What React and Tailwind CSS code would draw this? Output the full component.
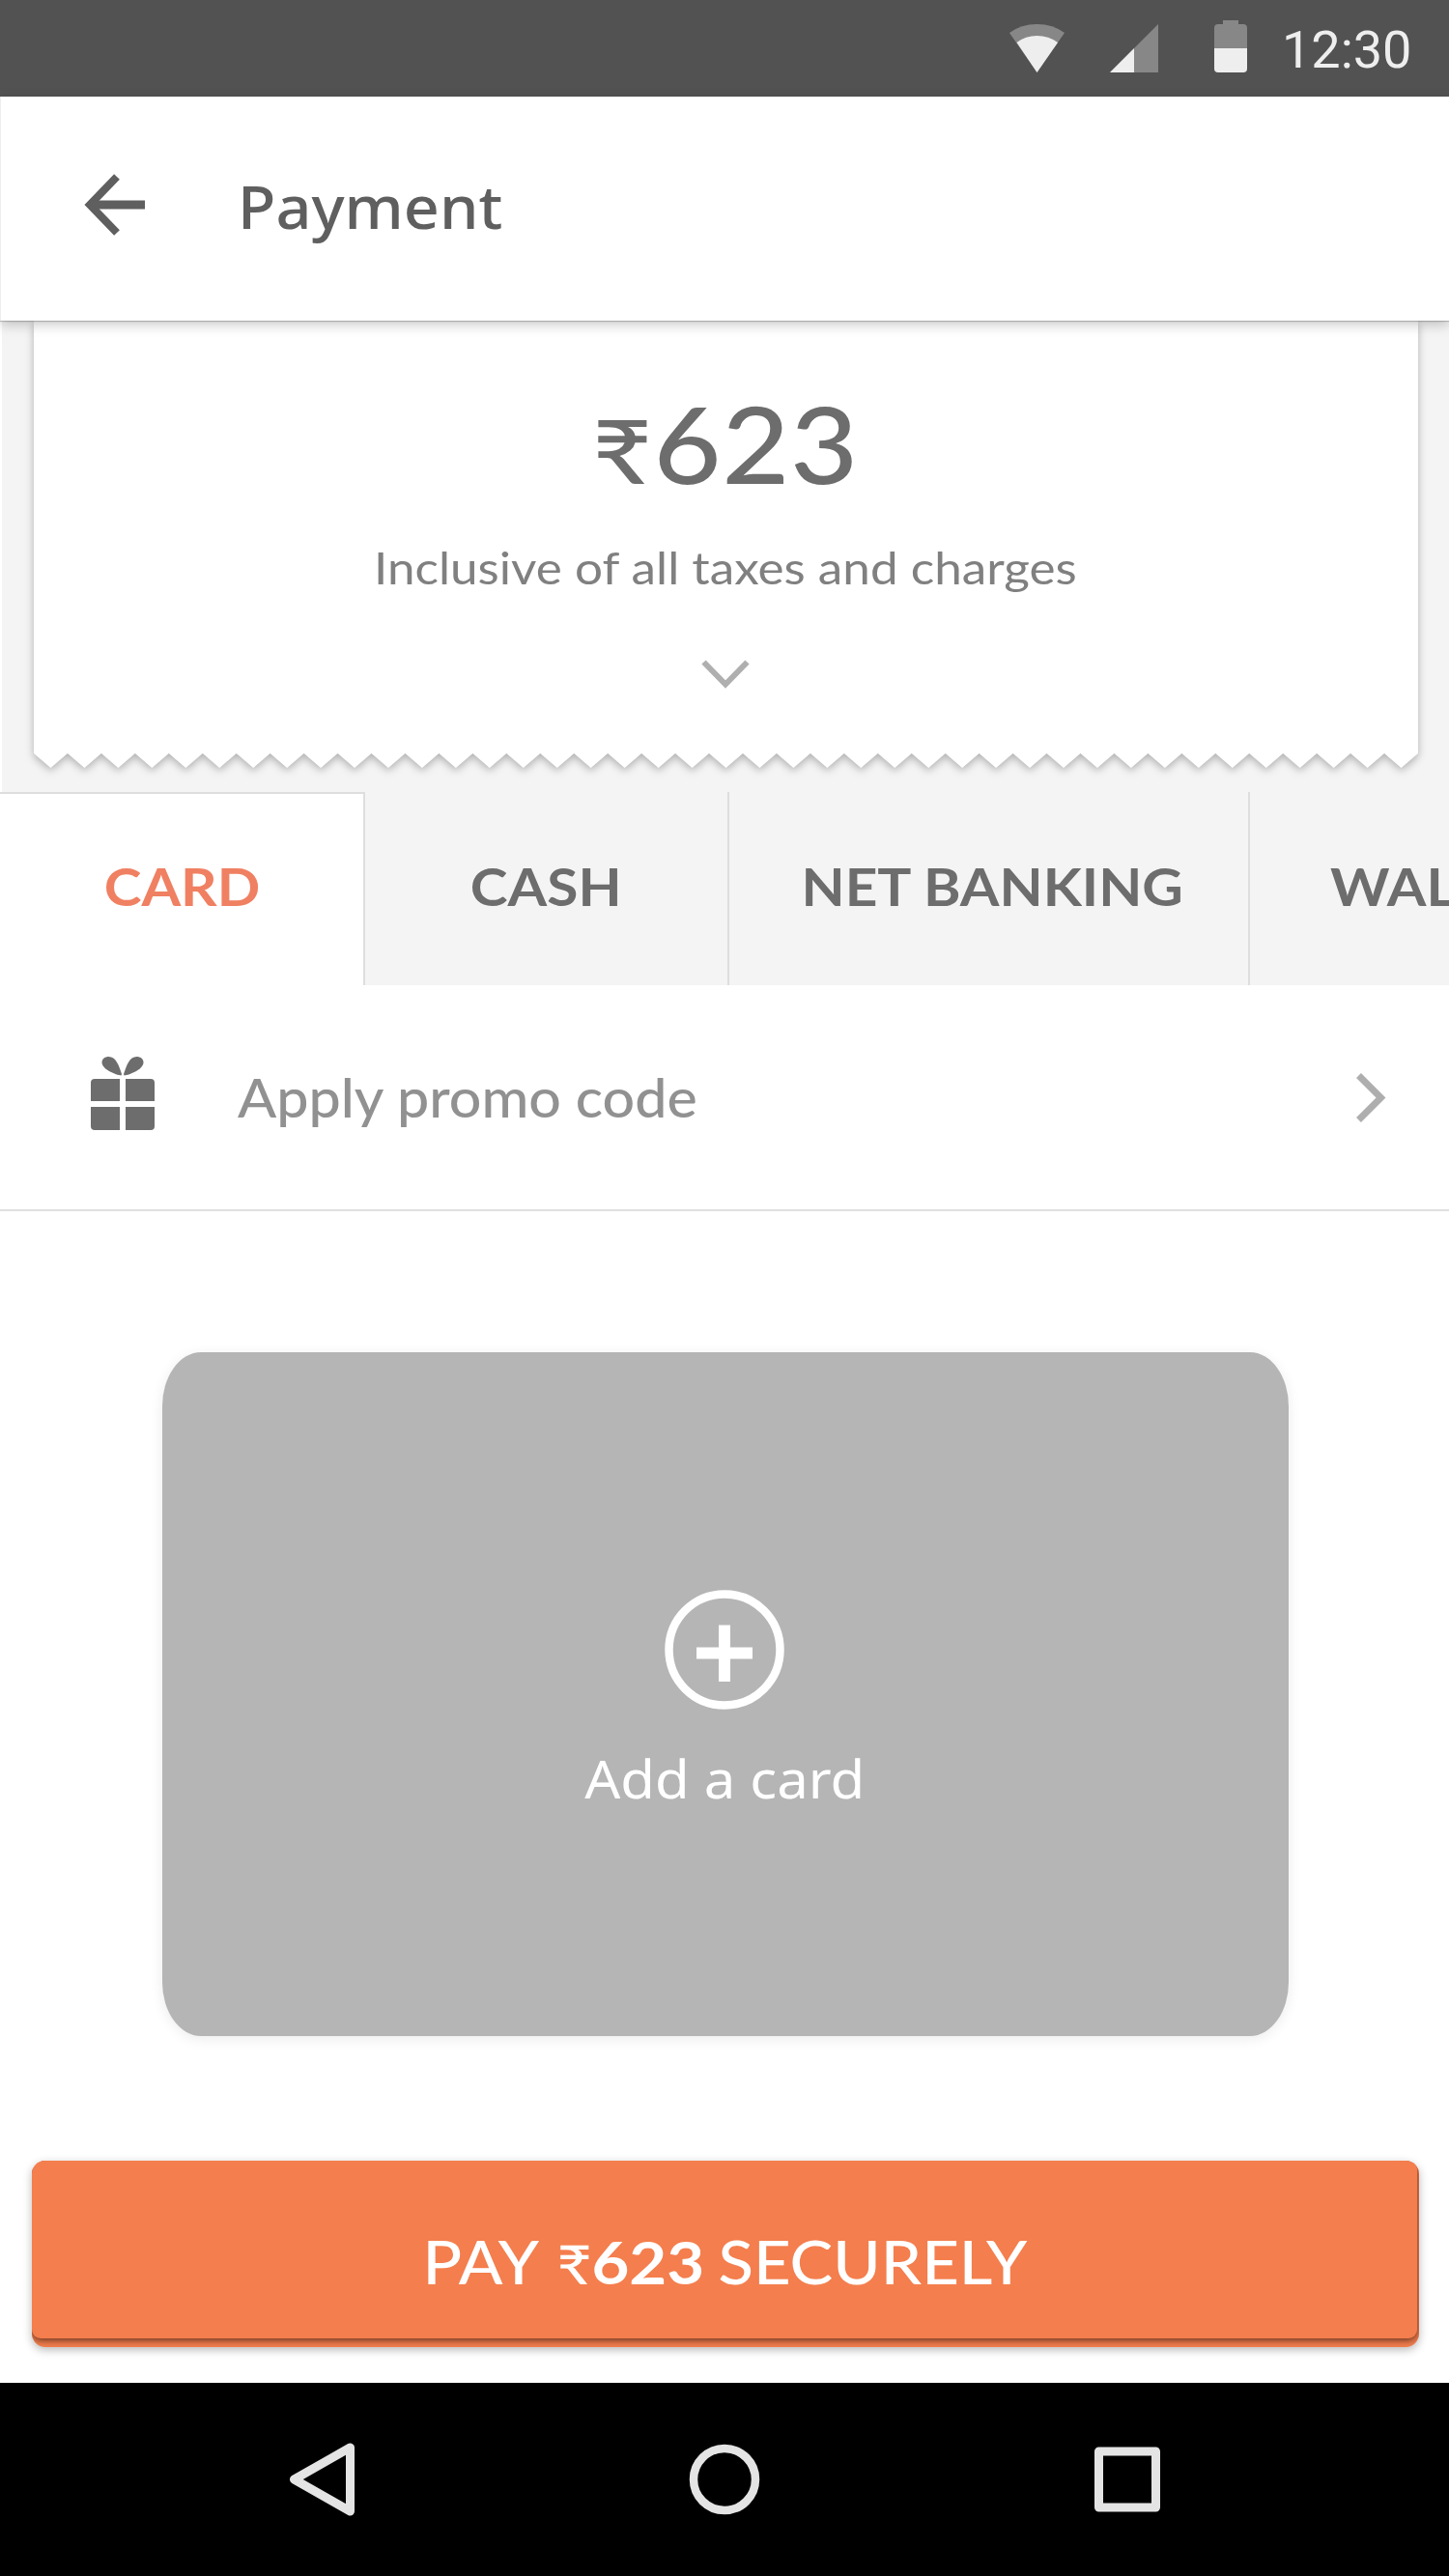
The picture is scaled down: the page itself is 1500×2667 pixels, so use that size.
import clsx from 'clsx';

const tabs = [
    { label: 'CARD', box: 'w-[378px] justify-center pl-[2px]', active: true },
    { label: 'CASH', box: 'w-[377px] justify-center' },
    { label: 'NET BANKING', box: 'w-[539px] justify-center pl-[8px]' },
    { label: 'WALLETS', box: 'w-[420px] pl-[83px]' },
];

// 41 teeth hanging from the bottom edge of the receipt
const TEETH = 41;
const TOOTH_WIDTH = 1433 / TEETH;
const zigzag = Array.from({ length: TEETH }, (_, i) => {
    const x = i * TOOTH_WIDTH;
    return `L${(x + TOOTH_WIDTH / 2).toFixed(2)} 16 L${(x + TOOTH_WIDTH).toFixed(2)} 1`;
}).join(' ');

const StatusBar = () => (
    <div className="flex h-[100px] items-center bg-[#525252] pl-[1045px] text-[#eeeeee]">
        <svg className="h-[50px] w-[57px] shrink-0" viewBox="0 0 57 50">
            <path d="M28.5 50 L0 9 Q12 0 28.5 0 Q45 0 57 9 Z" fill="#878787" />
            <path d="M28.5 50 L7.5 19 Q16.5 12 28.5 12 Q40.5 12 50 19 Z" fill="currentColor" />
        </svg>
        <svg className="ml-[47px] h-[50px] w-[50px] shrink-0" viewBox="0 0 50 50">
            <path d="M0 50 L50 0 V50 Z" fill="#878787" />
            <path d="M0 50 L25 25 V50 Z" fill="currentColor" />
        </svg>
        <svg className="mb-1 ml-[58px] h-[54px] w-[34px] shrink-0" viewBox="0 0 34 54">
            <path d="M9 0 H25 V4 H30 Q34 4 34 8 V29 H0 V8 Q0 4 4 4 H9 Z" fill="#878787" />
            <path d="M0 29 H34 V50 Q34 54 30 54 H4 Q0 54 0 50 Z" fill="currentColor" />
        </svg>
        <span className="ml-[36px] pt-[3px] font-['Roboto',sans-serif] text-[54px] leading-none">12:30</span>
    </div>
);

const Header = () => (
    <header className="relative z-10 flex h-[232px] items-center border-l border-[#eeeeee] bg-white pl-[86px] text-[#5f5f5f] shadow-[0_1px_1px_rgba(0,0,0,0.2),0_4px_12px_rgba(0,0,0,0.22)]">
        <svg className="mb-[9px] h-[64px] w-[64px]" viewBox="0 0 64 64" fill="none" stroke="currentColor" strokeWidth="8">
            <path d="M34 3 L6 32 L34 61" />
            <path d="M7 32 H63" strokeWidth="9" />
        </svg>
        <h1 className="ml-[95px] origin-left scale-x-[1.06] pb-[4px] font-['Noto_Sans',sans-serif] text-[61px] leading-[80px] font-medium">
            Payment
        </h1>
    </header>
);

const Receipt = () => (
    <section className="ml-[2px] h-[488px] bg-[#f4f4f4] pl-[33px]">
        <div className="w-[1433px] drop-shadow-[0_3px_4px_rgba(0,0,0,0.28)]">
            <div className="flex h-[448px] flex-col items-center bg-white pt-[66px] pr-[2px]">
                <div className="flex h-[120px] scale-x-[1.1] items-baseline pl-[3px] font-['Lato',sans-serif] text-[110px] leading-[120px] font-medium text-[#6d6d6d]">
                    <span className="mr-[3px] inline-block scale-x-[1.05] text-[92px] leading-[120px]">₹</span>
                    <span className="tracking-[0.5px]">623</span>
                </div>
                <p className="mt-[39px] scale-x-[1.09] font-['Lato',sans-serif] text-[47px] leading-[60px] text-[#808080]">
                    Inclusive of all taxes and charges
                </p>
                <svg className="mt-[66px] h-[30px] w-[50px]" viewBox="0 0 50 30" fill="none" stroke="#afafaf" strokeWidth="6">
                    <path d="M2.5 2.5 L25 25.5 L47.5 2.5" />
                </svg>
            </div>
            <svg className="-mt-px block h-[17px] w-[1433px]" viewBox="0 0 1433 17">
                <path d={`M0 0 V1 ${zigzag} V0 Z`} fill="#ffffff" />
            </svg>
        </div>
    </section>
);

const Tabs = () => (
    <nav className="flex h-[200px] w-full overflow-hidden bg-[#f4f4f4]">
        {tabs.map(({ label, box, active }) => (
            <button
                key={label}
                type="button"
                className={clsx(
                    "flex shrink-0 items-center border-r-2 border-[#dedede] font-['Lato',sans-serif] text-[54px] font-bold",
                    box,
                    active ? 'border-t-2 bg-white pb-[8px] text-[#f08062]' : 'pb-[6px] text-[#6d6d6d]',
                )}
            >
                <span className={clsx('scale-x-[1.085]', label === 'WALLETS' && 'origin-left')}>{label}</span>
            </button>
        ))}
    </nav>
);

const PromoRow = () => (
    <div className="flex h-[234px] items-center border-b-2 border-[#e0e0e0] pr-[65px] pl-[94px]">
        <svg className="mt-[-8px] h-[76px] w-[66px]" viewBox="0 0 66 76" fill="#6d6d6d">
            <path d="M31.5 19.5 C26 19 11.5 13 11.5 6 C11.5 2 15 0 18.5 0 C26 0 29 9 32 18 Z" />
            <path d="M34.5 19.5 C40 19 54.5 13 54.5 6 C54.5 2 51 0 47.5 0 C40 0 37 9 34 18 Z" />
            <path d="M4 23 H30 V46 H0 V27 Q0 23 4 23 Z" />
            <path d="M36 23 H62 Q66 23 66 27 V46 H36 Z" />
            <path d="M0 52 H30 V76 H4 Q0 76 0 72 Z" />
            <path d="M36 52 H66 V72 Q66 76 62 76 H36 Z" />
        </svg>
        <span className="ml-[86px] flex-1 origin-left scale-x-[1.075] pt-px font-['Lato',sans-serif] text-[55px] font-medium text-[#919191]">
            Apply promo code
        </span>
        <svg className="h-[51px] w-[31px]" viewBox="0 0 31 51" fill="none" stroke="#aeaeae" strokeWidth="7">
            <path d="M2.5 2.5 L25.5 25.5 L2.5 48.5" />
        </svg>
    </div>
);

const AddCard = () => (
    <button
        type="button"
        className="mt-[146px] ml-[168px] flex h-[708px] w-[1166px] flex-col items-center rounded-[40px/56px] bg-[#b5b5b5] pt-[246px] pr-[2px] text-white shadow-[0_3px_14px_rgba(0,0,0,0.08)]"
    >
        <svg className="h-[124px] w-[124px]" viewBox="0 0 124 124" fill="none" stroke="currentColor">
            <circle cx="62" cy="62" r="57.5" strokeWidth="8.5" />
            <path d="M62 36.5 V95 M33 65.5 H91" strokeWidth="12" />
        </svg>
        <span className="mt-[35px] scale-x-[1.065] font-['Noto_Sans',sans-serif] text-[54.5px] leading-[72px] font-[450]">Add a card</span>
    </button>
);

const PayButton = () => (
    <div className="mt-[129px] ml-[33px] h-[193px] w-[1436px] rounded-[14px] bg-[#f47e4d] shadow-[0_3px_10px_rgba(0,0,0,0.28)]">
        <div className="h-[193px] overflow-hidden rounded-[14px]">
            <button
                type="button"
                className="flex h-[184px] w-[1434px] justify-center rounded-[9px] bg-[#f47e4d] pt-[65px] font-['Lato',sans-serif] text-[61px] leading-[80px] font-medium text-white shadow-[0_2px_7px_rgba(0,0,0,0.6)]"
            >
                <span className="flex scale-x-[1.1] items-baseline">
                    <span>PAY</span>
                    <span className="ml-[17px] text-[56px]">₹</span>
                    <span className="font-bold">623</span>
                    <span className="ml-[13px]">SECURELY</span>
                </span>
            </button>
        </div>
    </div>
);

const NavBar = () => (
    <div className="mt-[37px] flex h-[200px] items-center bg-black pl-[299px] text-[#e4e4e4]">
        <svg className="h-[76px] w-[70px]" viewBox="0 0 70 76" fill="none" stroke="currentColor" strokeWidth="9" strokeLinejoin="round">
            <path d="M5.5 38 L63.5 5 V71 Z" />
        </svg>
        <svg className="ml-[344px] h-[74px] w-[74px]" viewBox="0 0 74 74" fill="none" stroke="currentColor" strokeWidth="8.5">
            <circle cx="37" cy="37" r="32" />
        </svg>
        <svg className="ml-[345px] h-[68px] w-[70px]" viewBox="0 0 70 68" fill="none" stroke="currentColor" strokeWidth="9" strokeLinejoin="round">
            <rect x="5.5" y="5" width="59" height="58" />
        </svg>
    </div>
);

export default function App() {
    return (
        <div className="h-[2667px] w-[1500px] overflow-hidden bg-white">
            <StatusBar />
            <Header />
            <Receipt />
            <Tabs />
            <PromoRow />
            <AddCard />
            <PayButton />
            <NavBar />
        </div>
    );
}
